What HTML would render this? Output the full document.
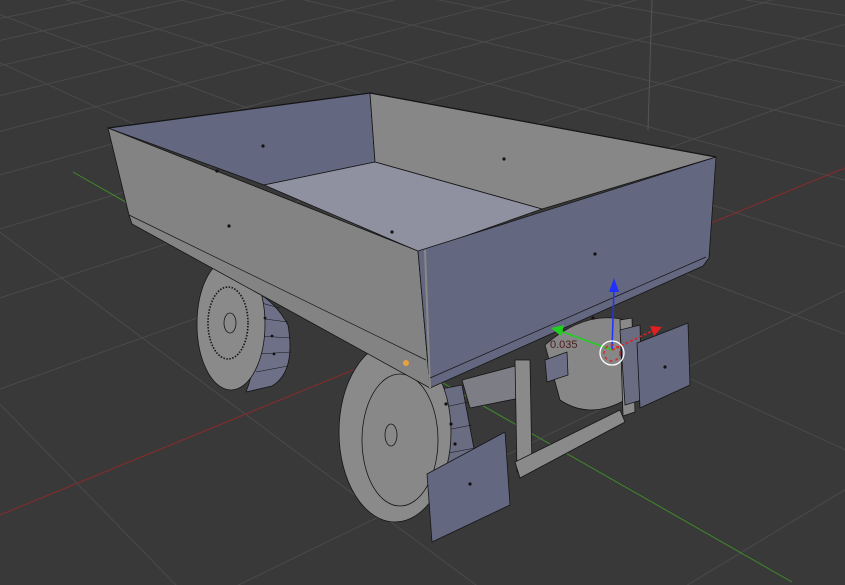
<!DOCTYPE html>
<html><head><meta charset="utf-8"><style>
html,body{margin:0;padding:0;background:#393939;overflow:hidden;width:845px;height:585px}
svg{display:block}
</style></head><body>
<svg id="s" width="845" height="585" viewBox="0 0 845 585" xmlns="http://www.w3.org/2000/svg">
<rect width="845" height="585" fill="#393939"/>
<g id="grid" stroke="#4a4a4a" stroke-width="1" fill="none"></g>
<line x1="0" y1="515" x2="845" y2="168" stroke="#8a2a2a" stroke-width="1"/>
<line x1="73" y1="172" x2="792" y2="582" stroke="#3f8a2a" stroke-width="1"/>
<line x1="652" y1="0" x2="648" y2="130" stroke="#555" stroke-width="1"/>
<g stroke="#151515" stroke-width="0.8" stroke-linejoin="round">
<!-- back right wheel -->
<path d="M545,345 Q585,310 625,320 Q640,360 625,400 Q590,420 560,400 Z" fill="#878787"/>
<!-- back left wheel tread -->
<path d="M240,285 Q272,295 288,325 Q296,372 272,386 L246,392 Q266,340 240,285 Z" fill="#6e7088"/>
<g stroke-width="0.6"><line x1="250" y1="300" x2="280" y2="308"/><line x1="257" y1="318" x2="288" y2="322"/><line x1="259" y1="336" x2="291" y2="338"/><line x1="259" y1="354" x2="291" y2="352"/><line x1="256" y1="372" x2="288" y2="366"/></g>
<ellipse cx="231" cy="324" rx="34" ry="66" fill="#8a8a8a"/>
<ellipse cx="228" cy="323" rx="20" ry="36" fill="#8a8a8a" stroke-dasharray="1.5 1.5" stroke-width="1.6"/>
<ellipse cx="230" cy="323" rx="6" ry="10" fill="#8a8a8a"/>
<!-- front wheel tread -->
<path d="M425,392 L462,385 L478,470 L440,482 Z" fill="#6a6c82"/>
<g stroke-width="0.6"><line x1="432" y1="410" x2="468" y2="402"/><line x1="436" y1="432" x2="472" y2="425"/><line x1="438" y1="455" x2="475" y2="448"/></g>
<ellipse cx="395" cy="432" rx="56" ry="90" fill="#8a8a8a"/>
<ellipse cx="400" cy="440" rx="38" ry="66" fill="#888"/>
<ellipse cx="391" cy="435" rx="6" ry="11" fill="#888"/>
<!-- cylinder -->
<polygon points="462,380 515,366 520,398 470,408" fill="#7d7d85"/>
<!-- frame -->
<path d="M515,360 L530,360 L532,470 L517,472 Z" fill="#8a8a8a"/>
<path d="M515,462 L620,410 L625,422 L520,478 Z" fill="#8a8a8a"/>
<path d="M620,320 L632,318 L635,412 L623,416 Z" fill="#8a8a8a"/>
<path d="M545,360 L567,352 L568,375 L547,382 Z" fill="#6c6e86"/>
<path d="M620,330 L640,325 L642,400 L625,405 Z" fill="#6a6c82"/>
<!-- inner back wall -->
<polygon points="108,128 370,93 375,162 264,185" fill="#636780"/>
<polygon points="370,93 716,157 542,209 375,162" fill="#878787"/>
<polygon points="264,185 375,162 542,209 420,252" fill="#8f90a0"/>
<polygon points="108,128 418,251 430,388 132,224 129,215" fill="#838383"/>
<line x1="129" y1="215" x2="426" y2="360" stroke-width="0.7"/>
<polygon points="418,251 716,157 709,258 703,266 430,388" fill="#636780"/>
<line x1="425" y1="250" x2="430" y2="388" stroke="#888" stroke-width="2"/>
<line x1="706" y1="257" x2="430" y2="378" stroke-width="0.7"/>
<line x1="108" y1="128" x2="370" y2="93" stroke-width="1.2"/>
<line x1="370" y1="93" x2="716" y2="157" stroke-width="1.2"/>
<polygon points="427,474 505,432 510,505 432,542" fill="#636780"/>
<polygon points="637,343 688,323 690,385 640,408" fill="#636780"/>
</g>
<g fill="#111">
<circle cx="263" cy="146" r="1.6"/><circle cx="504" cy="159" r="1.6"/><circle cx="229" cy="226" r="1.6"/>
<circle cx="392" cy="232" r="1.6"/><circle cx="595" cy="254" r="1.6"/><circle cx="470" cy="484" r="1.6"/>
<circle cx="665" cy="367" r="1.6"/><circle cx="217" cy="171" r="1.6"/><circle cx="593" cy="318" r="1.6"/>
<circle cx="446" cy="404" r="1.6"/><circle cx="451" cy="424" r="1.6"/><circle cx="455" cy="444" r="1.6"/>
<circle cx="265" cy="318" r="1.4"/><circle cx="272" cy="336" r="1.4"/><circle cx="274" cy="354" r="1.4"/>
</g>
<circle cx="406" cy="363" r="3" fill="#e8a040"/>
<line x1="612" y1="350" x2="614" y2="288" stroke="#2030ff" stroke-width="1.5"/>
<polygon points="614,278 609,292 619,292" fill="#2030ff"/>
<line x1="612" y1="350" x2="560" y2="331" stroke="#20d020" stroke-width="1.5"/>
<polygon points="551,328 564,325 561,336" fill="#20d020"/>
<line x1="612" y1="350" x2="652" y2="331" stroke="#e02020" stroke-width="1.5" stroke-dasharray="3 2"/>
<polygon points="662,327 650,326 654,336" fill="#e02020"/>
<circle cx="612" cy="353" r="12" fill="none" stroke="#fff" stroke-width="1.3"/>
<circle cx="612" cy="353" r="8" fill="none" stroke="#e02020" stroke-width="1.3" stroke-dasharray="3 3"/>
<text x="550" y="348" font-family="Liberation Sans, sans-serif" font-size="11" fill="#4a1a1a">0.035</text>
</svg>
<script>
(function(){
var O=[392,354],VX=[2500,-512],VY=[-600,-212],a=0.065,b=0.13;
function P(u,v){var w=1+a*u+b*v;return [(O[0]+a*u*VX[0]+b*v*VY[0])/w,(O[1]+a*u*VX[1]+b*v*VY[1])/w,w];}
var g=document.getElementById('grid'),ns='http://www.w3.org/2000/svg';
function line(f){var pts=[];for(var t=-40;t<=40;t+=0.2){var p=f(t);if(p[2]>0.03)pts.push(p[0].toFixed(1)+','+p[1].toFixed(1));}
 if(pts.length>1){var e=document.createElementNS(ns,'polyline');e.setAttribute('points',pts.join(' '));g.appendChild(e);}}
for(var i=-15;i<=15;i++){if(i==0)continue;(function(i){line(function(t){return P(i,t);});line(function(t){return P(t,i);});})(i);}
})();
</script>
</body></html>
